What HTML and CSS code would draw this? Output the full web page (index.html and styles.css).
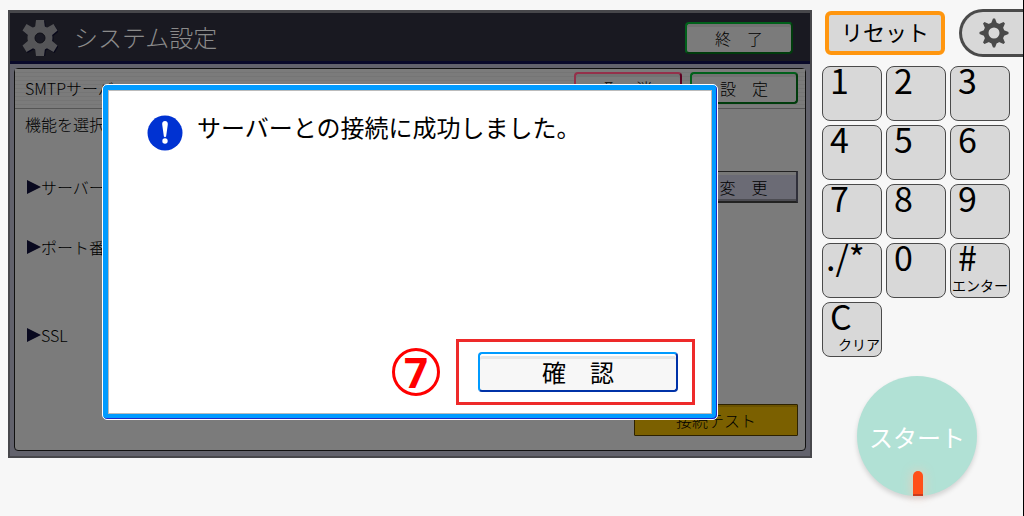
FILE: index.html
```html
<!DOCTYPE html>
<html lang="ja">
<head>
    <meta charset="UTF-8">
    <meta name="viewport" content="width=device-width, initial-scale=1.0">
    <title>システム設定</title>
    <link rel="stylesheet" href="styles.css">
</head>
<body>
    <main class="screen">
        <header class="screen-header">
            <svg class="header-gear" viewBox="0 0 36 36" aria-hidden="true">
                <g fill="#08081a" transform="translate(1 1)">
                    <circle cx="18" cy="18" r="12.500"/>
                    <path id="teeth" d="M14 0h8l1 8H13zM14 36h8l1-8H13zM.5 10.500l4-6.500 7 4-4.500 8zM35.500 10.500l-4-6.500-7 4 4.500 8zM.5 25.500l4 6.500 7-4-4.500-8zM35.500 25.500l-4 6.500-7-4 4.500-8z"/>
                </g>
                <g fill="#555558">
                    <circle cx="18" cy="18" r="12.500"/>
                    <use href="#teeth"/>
                </g>
                <circle cx="18" cy="18" r="5" fill="#1a1a24" stroke="#101018"/>
            </svg>
            <h1>システム設定</h1>
            <button class="btn btn-green" type="button">終　了</button>
        </header>
        <section class="panel">
            <div class="panel-title">
                <h2>SMTPサーバー</h2>
                <button class="btn btn-red" type="button">取　消</button>
                <button class="btn btn-green" type="button">設　定</button>
            </div>
            <p class="guide">機能を選択</p>
            <div class="row">
                <span class="arrow"></span><span>サーバー</span>
                <button class="btn btn-change" type="button">変　更</button>
            </div>
            <div class="row">
                <span class="arrow"></span><span>ポート番号</span>
            </div>
            <div class="row row-ssl">
                <span class="arrow"></span><span>SSL</span>
            </div>
            <button class="btn btn-test" type="button">接続テスト</button>
        </section>

        <div class="dialog" role="dialog" aria-labelledby="message">
            <div class="dialog-inner">
                <div class="message-row">
                    <svg class="info-icon" viewBox="0 0 36 36" aria-hidden="true">
                        <circle cx="18" cy="18" r="17.500" fill="#0032d2"/>
                        <path d="M18 6c-2 0-3 1.500-2.800 3.500l1.600 11.500c.2 1.500 2.200 1.500 2.400 0l1.600-11.500C21 7.500 20 6 18 6z" fill="#fff"/>
                        <circle cx="18" cy="26" r="2.700" fill="#fff"/>
                    </svg>
                    <p id="message">サーバーとの接続に成功しました。</p>
                </div>
                <div class="dialog-footer">
                    <span class="step">7</span>
                    <div class="highlight">
                        <button class="btn-ok" type="button">確　認</button>
                    </div>
                </div>
            </div>
        </div>
    </main>

    <aside class="controls">
        <div class="top-keys">
            <button class="reset" type="button">リセット</button>
            <button class="tools" type="button" aria-label="設定">
                <svg viewBox="0 0 30 30" aria-hidden="true">
                    <g fill="#4a4a4a">
                        <path id="spikes" d="M14 .5h2l3 7.500h-8zM14 29.500h2l3-7.500h-8zM.5 14v2l7.500 3v-8zM29.500 14v2l-7.500 3v-8z"/>
                        <use href="#spikes" transform="rotate(45 15 15)"/>
                    </g>
                    <circle cx="15" cy="15" r="8" fill="#d8d8d8" stroke="#4a4a4a" stroke-width="5"/>
                </svg>
            </button>
        </div>
        <div class="keypad">
            <button type="button">1</button>
            <button type="button">2</button>
            <button type="button">3</button>
            <button type="button">4</button>
            <button type="button">5</button>
            <button type="button">6</button>
            <button type="button">7</button>
            <button type="button">8</button>
            <button type="button">9</button>
            <button class="key-symbol" type="button">./*</button>
            <button type="button">0</button>
            <button type="button">#<small>エンター</small></button>
            <button type="button">C<small>クリア</small></button>
        </div>
        <button class="start" type="button">スタート<span class="lamp"></span></button>
    </aside>
</body>
</html>
```

FILE: styles.css
```css
* {
    box-sizing: border-box;
}

body {
    margin: 0;
    min-height: 100vh;
    display: flex;
    align-items: flex-start;
    background: #f7f7f7;
    color: #000;
    font-family: "Noto Sans CJK JP", sans-serif;
    font-size: 16px;
    font-weight: 300;
}

h1, h2, p {
    margin: 0;
    font-weight: 300;
}

button {
    padding: 0;
    font-family: inherit;
    font-weight: 300;
    color: #000;
    cursor: pointer;
}

.screen {
    position: relative;
    flex: 1;
    margin: 10px 0 0 8px;
    padding-bottom: 1px;
    border: 2px solid #47474b;
    border-top-width: 3px;
    background: #62626c;
}

.screen-header {
    display: flex;
    align-items: center;
    height: 51px;
    padding: 2px 17px 0 12px;
    background: #191921;
    border-bottom: 3px solid #09092a;
}

.header-gear {
    width: 36px;
    height: 36px;
}

.screen-header h1 {
    flex: 1;
    margin-left: 16px;
    padding-bottom: 2px;
    color: #8b8b8b;
    font-size: 24px;
    line-height: 40px;
}

.btn {
    width: 108px;
    height: 32px;
    border: 2px solid #000;
    border-radius: 4px;
    background: #7b7b7b;
    box-shadow: inset 0 3px #727272;
    font-size: 16px;
    line-height: 24px;
}

.btn-green {
    border-color: #00601a #003c0c #003c0c #00601a;
}

.btn-red {
    border-color: #94304a #5c0020 #5c0020 #94304a;
}

.panel {
    display: flex;
    flex-direction: column;
    margin: 4px;
    border: 1px solid #111;
    border-radius: 4px;
    background: #7b7b7b;
}

.panel-title {
    display: flex;
    align-items: center;
    gap: 8px;
    height: 40px;
    padding: 0 7px 2px 10px;
    border-bottom: 1px solid #555;
    background: repeating-linear-gradient(#7b7b7b 0 3px, #757575 3px 4px);
}

.panel-title h2 {
    flex: 1;
    font-size: 16px;
}

.guide {
    padding-left: 10px;
    line-height: 30px;
}

.row {
    display: flex;
    align-items: center;
    height: 32px;
    margin: 32px 7px 0 12px;
}

.row + .row {
    margin-top: 28px;
}

.row + .row-ssl {
    margin-top: 56px;
}

.arrow {
    border: 7px solid transparent;
    border-left: 14px solid #09091f;
    border-right: 0;
}

.btn-change {
    margin-left: auto;
    border-width: 1px 2px 2px 1px;
    border-color: #222 #30303a #222 #222;
    border-radius: 0;
    background: #6b6b75;
    box-shadow: inset 0 3px #777, inset 0 -2px #4c4c52;
}

.btn-test {
    align-self: flex-end;
    width: 164px;
    margin: 53px 7px 14px 0;
    border: 1px solid #2d2200;
    border-radius: 1px;
    background: #7b6000;
    box-shadow: inset 0 2px #6b5300;
}

.dialog {
    position: absolute;
    inset: 71px 92px 36px;
    border: 1px solid #fff;
    border-radius: 5px;
    background: #009bff;
    box-shadow: inset -1px -1px #1c28c8;
    padding: 5px;
}

.dialog-inner {
    display: flex;
    flex-direction: column;
    justify-content: space-between;
    height: 100%;
    padding: 18px 16px 8px 38px;
    border: 1px solid #bbb;
    background: #fff;
}

.message-row {
    display: flex;
    align-items: flex-start;
    gap: 14px;
}

.message-row p {
    font-size: 24px;
    font-weight: 400;
    line-height: 36px;
}

.info-icon {
    width: 36px;
    height: 36px;
    margin-top: 6px;
}

.dialog-footer {
    display: flex;
    align-items: center;
    justify-content: flex-end;
    gap: 16px;
}

.step {
    width: 48px;
    height: 48px;
    border: 3px solid #f00;
    border-radius: 50%;
    color: #f00;
    font-family: "Open Sans", sans-serif;
    font-size: 42px;
    font-weight: 700;
    line-height: 42px;
    text-align: center;
}

.highlight {
    padding: 10px 14px 10px 19px;
    border: 3px solid #ee2a2a;
}

.btn-ok {
    display: block;
    width: 200px;
    height: 40px;
    border: 2px solid;
    border-color: #009bff #0032a8 #0032a8 #009bff;
    border-radius: 4px;
    background: #f7f7f7;
    box-shadow: inset 0 2px #fff, inset 0 5px #e6e6e6;
    font-size: 24px;
    font-weight: 400;
    line-height: 32px;
}

.controls {
    width: 212px;
    min-height: 100vh;
    padding: 9px 0 0 10px;
    border-right: 1px solid #000;
}

.top-keys {
    display: flex;
    align-items: center;
    justify-content: space-between;
    padding-left: 3px;
}

.reset {
    width: 120px;
    height: 44px;
    padding-bottom: 4px;
    border: 4px solid #ff960f;
    border-radius: 6px;
    background: #d8d8d8;
    font-size: 22px;
    font-weight: 400;
    line-height: 28px;
}

.tools {
    width: 64px;
    height: 48px;
    padding-left: 17px;
    border: 3px solid #4a4a4a;
    border-right: 0;
    border-radius: 24px 0 0 24px;
    background: #d8d8d8;
    text-align: left;
}

.tools svg {
    display: block;
    width: 30px;
    height: 30px;
}

.keypad {
    display: grid;
    grid-template-columns: repeat(3, 60px);
    grid-auto-rows: 55px;
    gap: 4px;
    margin-top: 9px;
}

.keypad button {
    display: flex;
    flex-direction: column;
    justify-content: space-between;
    padding: 0 0 2px 7px;
    border: 1px solid #4a4a4a;
    border-radius: 8px;
    background: #d8d8d8;
    font-size: 34px;
    font-weight: 400;
    line-height: 26px;
    text-align: left;
}

.keypad .key-symbol {
    padding-left: 3px;
}

.keypad small {
    align-self: flex-end;
    margin: 0 1px 0 -7px;
    font-size: 14px;
    line-height: 20px;
    white-space: nowrap;
}

.start {
    display: block;
    position: relative;
    width: 120px;
    height: 120px;
    margin: 19px 0 0 35px;
    border: 0;
    border-radius: 50%;
    background: #b1e1d5;
    box-shadow: 0 3px 5px rgba(0, 0, 0, 0.15);
    color: #fff;
    font-size: 24px;
    font-weight: 400;
}

.lamp {
    position: absolute;
    bottom: 0;
    left: 56px;
    width: 10px;
    height: 25px;
    border-bottom: 2px solid #c83c1e;
    border-radius: 5px 5px 0 0;
    background: #ff5019;
    box-shadow: 0 0 12px rgba(255, 200, 180, 0.8);
}
```
